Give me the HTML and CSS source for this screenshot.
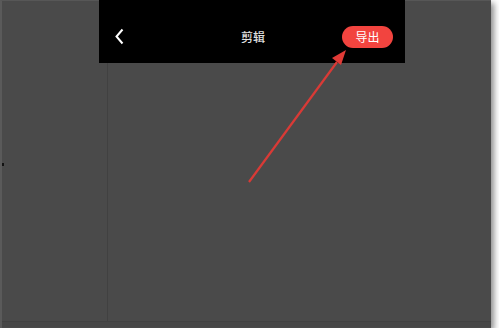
FILE: index.html
```html
<!DOCTYPE html>
<html lang="zh">
<head>
    <meta charset="UTF-8">
    <title>剪辑</title>
    <link rel="stylesheet" href="styles.css">
</head>
<body>
    <div class="frame">
        <div class="topbar">
            <span class="back">
                <svg width="10" height="17" viewBox="0 0 10 17">
                    <path d="M7.5 1.5 L1.5 8.5 L7.5 15.5" fill="none" stroke="#fff" stroke-width="2"/>
                </svg>
            </span>
            <span class="title">剪辑</span>
            <button class="export-btn">导出</button>
        </div>
        <div class="workspace">
            <div class="side"><span class="dot"></span></div>
            <div class="main"></div>
        </div>
        <div class="bottom-strip"></div>

        <!-- 标注箭头 -->
        <svg class="arrow" width="491" height="328" viewBox="0 0 491 328">
            <line x1="249" y1="182" x2="337" y2="62" stroke="#d93a36" stroke-width="2.2"/>
            <polygon points="346,50 332,58 341,65" fill="#e03a36"/>
        </svg>
    </div>
</body>
</html>
```

FILE: styles.css
```css
body {
    margin: 0;
    background-color: #fff;
    font-family: "Noto Sans CJK SC", "Noto Sans", sans-serif;
}
.frame {
    position: relative;
    width: 489px;
    height: 327px;
    background-color: #4a4a4a;
    border-left: 2px solid #5a5a5a;
    border-top: 1px solid #575757;
    box-shadow: 3px 3px 6px rgba(0, 0, 0, 0.45);
}
.topbar {
    display: flex;
    align-items: center;
    margin-left: 97px;
    width: 306px;
    height: 63px;
    margin-top: -1px;
    padding-top: 10px;
    background-color: #000;
    box-sizing: border-box;
}
.back {
    display: flex;
    margin-left: 16px;
    width: 10px;
}
.title {
    flex: 1;
    text-align: center;
    color: #e0e0e0;
    font-size: 12px;
    font-weight: 500;
    padding-left: 39px;
}
.export-btn {
    width: 51px;
    height: 22px;
    margin-right: 12px;
    border: none;
    border-radius: 11px;
    background-color: #f2443f;
    color: #fff;
    font-family: inherit;
    font-size: 12px;
    padding: 0;
}
.workspace {
    display: flex;
    height: 258px;
    border-bottom: 1px solid #424242;
}
.side {
    position: relative;
    width: 105px;
    border-right: 1px solid #414141;
}
.dot {
    position: absolute;
    left: 0;
    top: 100px;
    width: 2px;
    height: 3px;
    background-color: #111;
}
.main {
    flex: 1;
}
.bottom-strip {
    height: 5px;
    background-color: #474747;
}
.arrow {
    position: absolute;
    left: -2px;
    top: -1px;
}
```
